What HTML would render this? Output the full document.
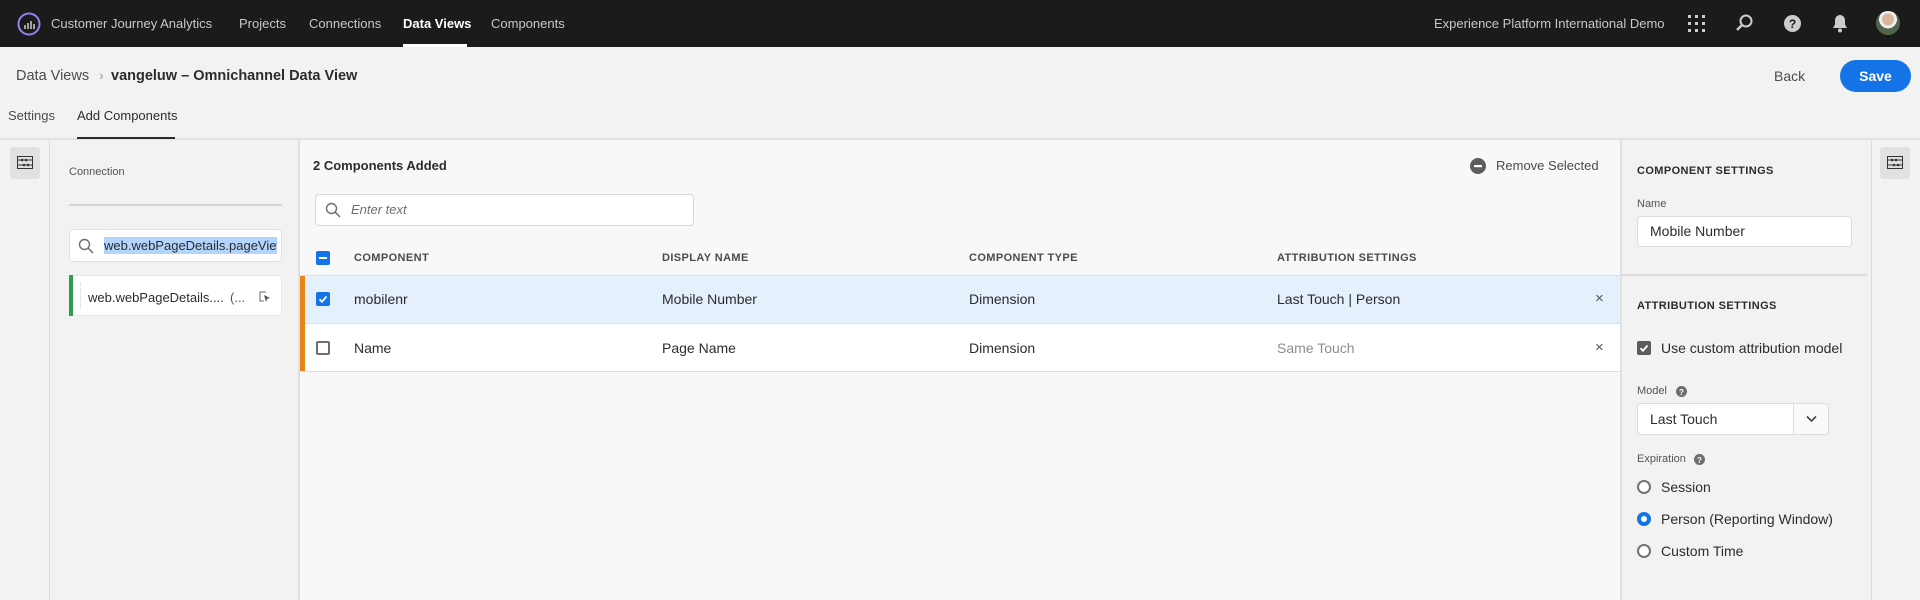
<!DOCTYPE html>
<html><head><meta charset="utf-8"><style>
*{box-sizing:border-box;margin:0;padding:0}
body{width:1920px;height:600px;overflow:hidden;background:#f2f2f2;font-family:"Liberation Sans",sans-serif;color:#2c2c2c;position:relative;font-size:14px}
.a{position:absolute;white-space:nowrap}
.top{position:absolute;left:0;top:0;width:1920px;height:47px;background:#1b1b1b}
.nav{color:#c8c8c8;font-size:13px;top:16px}
.hdr{font-size:11px;font-weight:bold;letter-spacing:.4px;color:#4b4b4b}
.cb{position:absolute;width:14px;height:14px;border-radius:2px}
.radio{position:absolute;width:14px;height:14px;border-radius:50%;border:2px solid #747474;background:#fff}
</style></head><body>
<div class="top"></div>
<svg class="a" style="left:17px;top:12px" width="24" height="24" viewBox="0 0 24 24"><circle cx="12" cy="12" r="10.5" fill="none" stroke="#9b7ef0" stroke-width="2"/><path d="M8 17v-4M11 17v-6M14 17v-8M17 17v-5" stroke="#ddd" stroke-width="1.4"/></svg>
<div class="a nav" style="left:51px">Customer Journey Analytics</div>
<div class="a nav" style="left:239px">Projects</div>
<div class="a nav" style="left:309px">Connections</div>
<div class="a nav" style="left:403px;color:#fff;font-weight:bold">Data Views</div>
<div class="a" style="left:403px;top:44px;width:64px;height:3px;background:#fff"></div>
<div class="a nav" style="left:491px">Components</div>
<div class="a nav" style="left:1434px">Experience Platform International Demo</div>
<svg class="a" style="left:1688px;top:15px" width="17" height="17" viewBox="0 0 17 17" fill="#ccc"><rect x="0" y="0" width="3" height="3"/><rect x="7" y="0" width="3" height="3"/><rect x="14" y="0" width="3" height="3"/><rect x="0" y="7" width="3" height="3"/><rect x="7" y="7" width="3" height="3"/><rect x="14" y="7" width="3" height="3"/><rect x="0" y="14" width="3" height="3"/><rect x="7" y="14" width="3" height="3"/><rect x="14" y="14" width="3" height="3"/></svg>
<svg class="a" style="left:1735px;top:14px" width="18" height="18" viewBox="0 0 18 18"><circle cx="11" cy="7" r="5.5" fill="none" stroke="#ccc" stroke-width="2"/><path d="M7 11l-5 5" stroke="#ccc" stroke-width="2.4"/></svg>
<svg class="a" style="left:1784px;top:15px" width="17" height="17" viewBox="0 0 17 17"><circle cx="8.5" cy="8.5" r="8.5" fill="#ccc"/><text x="8.5" y="13" font-size="12" font-weight="bold" text-anchor="middle" fill="#1b1b1b" font-family="Liberation Sans">?</text></svg>
<svg class="a" style="left:1832px;top:14px" width="16" height="19" viewBox="0 0 16 19" fill="#ccc"><path d="M8 1c-3 0-5 2.5-5 5.5v4L1 14h14l-2-3.5v-4C13 3.5 11 1 8 1z"/><circle cx="8" cy="16.5" r="2"/></svg>
<div class="a" style="left:1876px;top:11px;width:24px;height:24px;border-radius:50%;background:radial-gradient(circle at 50% 35%,#d9b49c 0 30%,#eee 31% 45%,#52654c 46%)"></div>

<div class="a" style="left:16px;top:68px;font-size:14.5px;color:#4b4b4b">Data Views</div>
<div class="a" style="left:99px;top:67px;font-size:14px;color:#999">›</div>
<div class="a" style="left:111px;top:68px;font-size:14.5px;font-weight:bold;color:#2c2c2c">vangeluw – Omnichannel Data View</div>
<div class="a" style="left:1774px;top:68px;font-size:14px;color:#4b4b4b">Back</div>
<div class="a" style="left:1840px;top:60px;width:71px;height:32px;border-radius:16px;background:#1473e6;color:#fff;font-weight:bold;font-size:14px;text-align:center;line-height:32px">Save</div>

<div class="a" style="left:8px;top:108px;font-size:13px;color:#4b4b4b">Settings</div>
<div class="a" style="left:77px;top:108px;font-size:13px;color:#2c2c2c">Add Components</div>
<div class="a" style="left:0;top:138px;width:1920px;height:2px;background:#e1e1e1"></div>
<div class="a" style="left:77px;top:137px;width:98px;height:2px;background:#2c2c2c"></div>

<!-- left rail -->
<div class="a" style="left:49px;top:140px;width:1px;height:460px;background:#dcdcdc"></div>
<div class="a" style="left:10px;top:147px;width:30px;height:32px;border-radius:3px;background:#e1e1e1"></div>
<svg class="a" style="left:17px;top:156px" width="16" height="13" viewBox="0 0 16 13"><rect x=".5" y=".5" width="15" height="12" fill="none" stroke="#333"/><path d="M1 4h14M1 9h14" stroke="#333"/><circle cx="5" cy="4" r="1.3" fill="#333"/><circle cx="9" cy="4" r="1.3" fill="#333"/><circle cx="7" cy="9" r="1.3" fill="#333"/><circle cx="11" cy="9" r="1.3" fill="#333"/></svg>

<!-- left panel -->
<div class="a" style="left:69px;top:166px;font-size:11px;color:#555">Connection</div>
<div class="a" style="left:69px;top:204px;width:213px;height:2px;background:#d5d5d5"></div>
<div class="a" style="left:69px;top:229px;width:213px;height:33px;background:#fff;border:1px solid #e1e1e1;border-radius:4px"></div>
<svg class="a" style="left:78px;top:238px" width="16" height="16" viewBox="0 0 16 16"><circle cx="6.5" cy="6.5" r="5" fill="none" stroke="#6e6e6e" stroke-width="1.4"/><path d="M10 10l5 5" stroke="#6e6e6e" stroke-width="1.5"/></svg>
<div class="a" style="left:104px;top:237px;width:173px;height:17px;background:#b3d4fc;overflow:hidden;font-size:13px;line-height:17px;color:#2c2c2c">web.webPageDetails.pageViews</div>
<div class="a" style="left:69px;top:275px;width:213px;height:41px;background:#fff;border:1px solid #e8e8e8;border-radius:3px"></div>
<div class="a" style="left:69px;top:275px;width:4px;height:41px;background:#2d9d50"></div>
<div class="a" style="left:80px;top:282px;width:1px;height:27px;border-left:1px dotted #ccc"></div>
<div class="a" style="left:88px;top:290px;font-size:13px;color:#2c2c2c">web.webPageDetails....</div>
<div class="a" style="left:230px;top:290px;font-size:13px;color:#555">(...</div>
<svg class="a" style="left:259px;top:291px" width="12" height="12" viewBox="0 0 12 12"><path d="M7 1H1v9h4" fill="none" stroke="#666"/><path d="M5 4l6 3-3 1-1 3z" fill="#555"/></svg>

<!-- main panel -->
<div class="a" style="left:298px;top:140px;width:2px;height:460px;background:#e1e1e1"></div>
<div class="a" style="left:300px;top:140px;width:1321px;height:460px;background:#f8f8f8"></div>
<div class="a" style="left:313px;top:158px;font-size:13px;font-weight:bold;color:#2c2c2c">2 Components Added</div>
<svg class="a" style="left:1470px;top:158px" width="16" height="16"><circle cx="8" cy="8" r="8" fill="#5c5c5c"/><rect x="4" y="7" width="8" height="2.2" fill="#fff"/></svg>
<div class="a" style="left:1496px;top:158px;font-size:13px;color:#4b4b4b">Remove Selected</div>
<div class="a" style="left:315px;top:194px;width:379px;height:32px;background:#fff;border:1px solid #d8d8d8;border-radius:4px"></div>
<svg class="a" style="left:325px;top:202px" width="16" height="16" viewBox="0 0 16 16"><circle cx="6.5" cy="6.5" r="5" fill="none" stroke="#6e6e6e" stroke-width="1.4"/><path d="M10 10l5 5" stroke="#6e6e6e" stroke-width="1.5"/></svg>
<div class="a" style="left:351px;top:202px;font-size:13px;font-style:italic;color:#6e6e6e">Enter text</div>

<div class="cb" style="left:316px;top:251px;background:#1473e6"></div>
<div class="a" style="left:319px;top:257px;width:8px;height:2px;background:#fff"></div>
<div class="a hdr" style="left:354px;top:252px">COMPONENT</div>
<div class="a hdr" style="left:662px;top:252px">DISPLAY NAME</div>
<div class="a hdr" style="left:969px;top:252px">COMPONENT TYPE</div>
<div class="a hdr" style="left:1277px;top:252px">ATTRIBUTION SETTINGS</div>
<div class="a" style="left:300px;top:275px;width:1321px;height:1px;background:#dedede"></div>
<div class="a" style="left:300px;top:276px;width:1321px;height:47px;background:#e5f0fd"></div>
<div class="a" style="left:300px;top:323px;width:1321px;height:1px;background:#dedede"></div>
<div class="a" style="left:300px;top:324px;width:1321px;height:47px;background:#fff"></div>
<div class="a" style="left:300px;top:371px;width:1321px;height:1px;background:#dedede"></div>
<div class="a" style="left:300px;top:276px;width:5px;height:95px;background:#e68619"></div>
<div class="cb" style="left:316px;top:292px;background:#1473e6"></div>
<svg class="a" style="left:316px;top:292px" width="14" height="14"><path d="M3.5 7.2l2.4 2.6 4.6-5.3" fill="none" stroke="#fff" stroke-width="1.8"/></svg>
<div class="cb" style="left:316px;top:341px;border:2px solid #6e6e6e;background:#fff"></div>
<div class="a" style="left:354px;top:291px">mobilenr</div>
<div class="a" style="left:662px;top:291px">Mobile Number</div>
<div class="a" style="left:969px;top:291px">Dimension</div>
<div class="a" style="left:1277px;top:291px">Last Touch | Person</div>
<div class="a" style="left:1595px;top:290px;font-size:15px;color:#555">×</div>
<div class="a" style="left:354px;top:340px">Name</div>
<div class="a" style="left:662px;top:340px">Page Name</div>
<div class="a" style="left:969px;top:340px">Dimension</div>
<div class="a" style="left:1277px;top:340px;color:#8e8e8e">Same Touch</div>
<div class="a" style="left:1595px;top:339px;font-size:15px;color:#555">×</div>

<!-- right panel -->
<div class="a" style="left:1620px;top:140px;width:2px;height:460px;background:#e1e1e1"></div>
<div class="a hdr" style="left:1637px;top:165px;color:#2c2c2c">COMPONENT SETTINGS</div>
<div class="a" style="left:1637px;top:198px;font-size:11px;color:#555">Name</div>
<div class="a" style="left:1637px;top:216px;width:215px;height:31px;background:#fff;border:1px solid #dcdcdc;border-radius:4px"></div>
<div class="a" style="left:1650px;top:223px">Mobile Number</div>
<div class="a" style="left:1622px;top:274px;width:245px;height:2px;background:#dcdcdc"></div>
<div class="a hdr" style="left:1637px;top:300px;color:#2c2c2c">ATTRIBUTION SETTINGS</div>
<div class="cb" style="left:1637px;top:341px;background:#5c5c5c"></div>
<svg class="a" style="left:1637px;top:341px" width="14" height="14"><path d="M3.5 7.2l2.4 2.6 4.6-5.3" fill="none" stroke="#fff" stroke-width="1.8"/></svg>
<div class="a" style="left:1661px;top:340px">Use custom attribution model</div>
<div class="a" style="left:1637px;top:385px;font-size:11px;color:#555">Model</div>
<svg class="a" style="left:1676px;top:386px" width="11" height="11"><circle cx="5.5" cy="5.5" r="5.5" fill="#6e6e6e"/><text x="5.5" y="9" font-size="8" font-weight="bold" text-anchor="middle" fill="#fff" font-family="Liberation Sans">?</text></svg>
<div class="a" style="left:1637px;top:403px;width:192px;height:32px;background:#fff;border:1px solid #dcdcdc;border-radius:4px"></div>
<div class="a" style="left:1793px;top:404px;width:1px;height:30px;background:#dcdcdc"></div>
<div class="a" style="left:1794px;top:404px;width:34px;height:30px;background:#fafafa;border-radius:0 4px 4px 0"></div>
<svg class="a" style="left:1806px;top:415px" width="11" height="8"><path d="M1 1.5l4.5 4.5 4.5-4.5" fill="none" stroke="#444" stroke-width="1.6"/></svg>
<div class="a" style="left:1650px;top:411px">Last Touch</div>
<div class="a" style="left:1637px;top:453px;font-size:11px;color:#555">Expiration</div>
<svg class="a" style="left:1694px;top:454px" width="11" height="11"><circle cx="5.5" cy="5.5" r="5.5" fill="#6e6e6e"/><text x="5.5" y="9" font-size="8" font-weight="bold" text-anchor="middle" fill="#fff" font-family="Liberation Sans">?</text></svg>
<div class="radio" style="left:1637px;top:480px"></div>
<div class="a" style="left:1661px;top:479px">Session</div>
<div class="radio" style="left:1637px;top:512px;border:4px solid #1473e6"></div>
<div class="a" style="left:1661px;top:511px">Person (Reporting Window)</div>
<div class="radio" style="left:1637px;top:544px"></div>
<div class="a" style="left:1661px;top:543px">Custom Time</div>

<!-- right rail -->
<div class="a" style="left:1871px;top:140px;width:1px;height:460px;background:#dcdcdc"></div>
<div class="a" style="left:1880px;top:147px;width:30px;height:32px;border-radius:3px;background:#e1e1e1"></div>
<svg class="a" style="left:1887px;top:156px" width="16" height="13" viewBox="0 0 16 13"><rect x=".5" y=".5" width="15" height="12" fill="none" stroke="#333"/><path d="M1 4h14M1 9h14" stroke="#333"/><circle cx="5" cy="4" r="1.3" fill="#333"/><circle cx="9" cy="4" r="1.3" fill="#333"/><circle cx="7" cy="9" r="1.3" fill="#333"/><circle cx="11" cy="9" r="1.3" fill="#333"/></svg>
</body></html>
